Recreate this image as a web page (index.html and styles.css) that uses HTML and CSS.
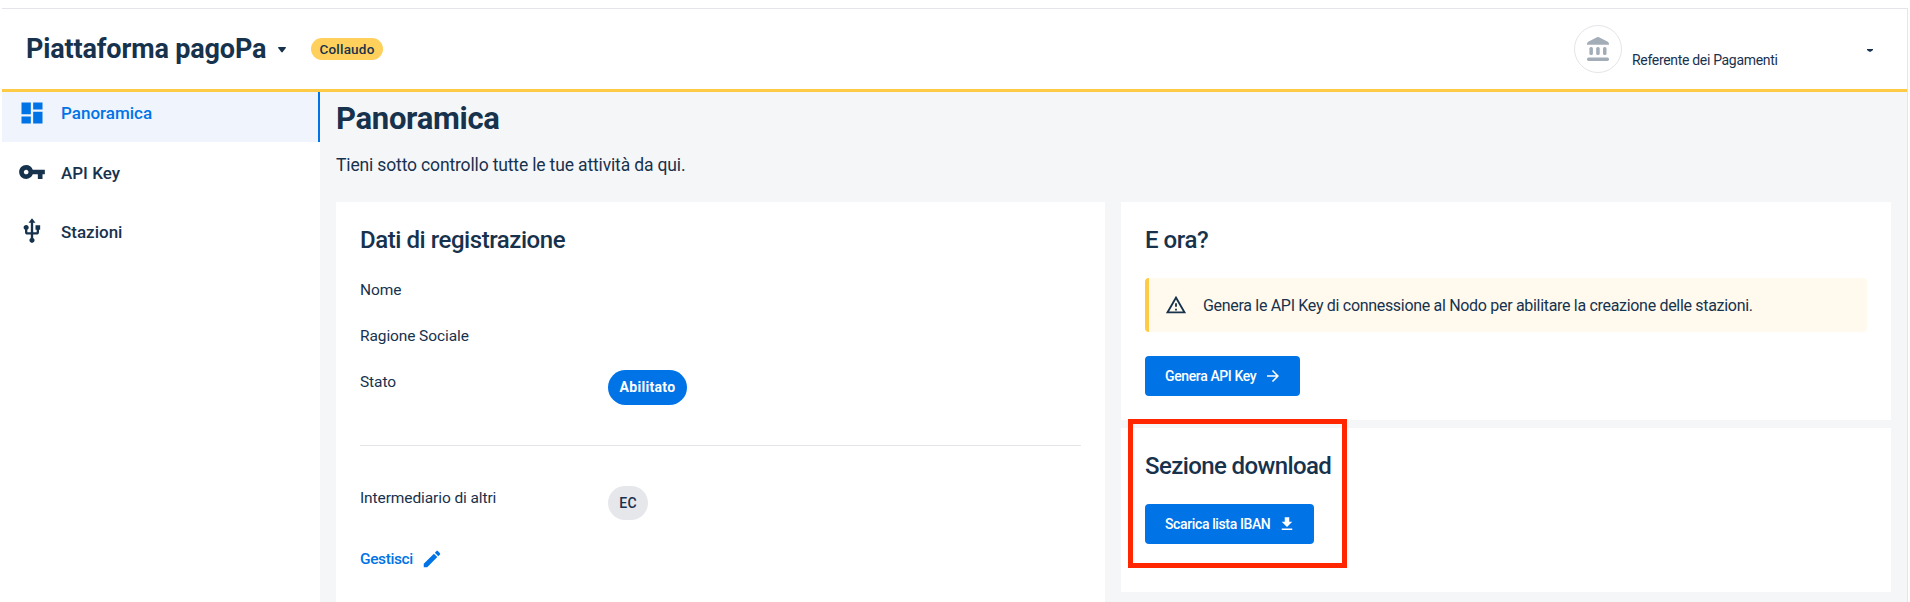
FILE: index.html
```html
<!DOCTYPE html>
<html lang="it">
<head>
<meta charset="utf-8">
<title>Piattaforma pagoPa</title>
<link rel="stylesheet" href="styles.css">
</head>
<body>
<div class="app">
  <header class="header">
    <div class="product">
      <span class="product-name">Piattaforma pagoPa</span>
      <svg class="product-caret" viewBox="0 0 8 6"><path d="M0 .7Q0 0 .8 0h6.400Q8 0 8 .7L4.700 5Q4 5.800 3.300 5z"/></svg>
      <span class="env-badge">Collaudo</span>
    </div>
    <div class="party">
      <span class="avatar">
        <svg viewBox="0 0 22 24" width="22" height="24"><path d="M10 .3Q11-.2 12 .3l8.800 4.500Q22 5.500 22 7v.7H0V7q0-1.500 1.200-2.200z"/><rect x="2.400" y="10" width="3.500" height="8" rx="1.500"/><rect x="9.200" y="10" width="3.500" height="8" rx="1.500"/><rect x="16" y="10" width="3.500" height="8" rx="1.500"/><rect y="20.500" width="22" height="3.400" rx="1.600"/></svg>
      </span>
      <span class="role">Referente dei Pagamenti</span>
      <svg class="party-caret" viewBox="0 0 6 3"><path d="M0 0h6v1L4 2.400Q3 3.300 2 2.400L0 1z"/></svg>
    </div>
  </header>
  <div class="body">
    <nav class="sidebar">
      <a class="nav-item active"><svg class="nav-icon" viewBox="0 0 24 24"><path d="M3 13h8V3H3zm0 8h8v-6H3zm10 0h8V11h-8zm0-18v6h8V3z"/></svg><span>Panoramica</span></a>
      <a class="nav-item"><svg class="nav-icon" viewBox="0 0 24 24"><path d="M12.650 10C11.830 7.670 9.610 6 7 6c-3.310 0-6 2.690-6 6s2.690 6 6 6c2.610 0 4.830-1.670 5.650-4H17v4h4v-4h2v-4zM7 14c-1.100 0-2-.9-2-2s.9-2 2-2 2 .9 2 2-.9 2-2 2z"/></svg><span>API Key</span></a>
      <a class="nav-item"><svg class="nav-icon" viewBox="0 0 24 24"><path d="M15 7v4h1v2h-3V5h2l-3-4-3 4h2v8H8v-2.070c.7-.37 1.200-1.080 1.200-1.930 0-1.210-.99-2.200-2.200-2.200-1.210 0-2.200.99-2.200 2.200 0 .85.5 1.560 1.200 1.930V13c0 1.110.89 2 2 2h3v3.050c-.71.370-1.200 1.100-1.200 1.950 0 1.220.99 2.200 2.200 2.200 1.210 0 2.200-.98 2.200-2.200 0-.85-.49-1.580-1.200-1.950V15h3c1.110 0 2-.89 2-2v-2h1V7z"/></svg><span>Stazioni</span></a>
    </nav>
    <main class="content">
      <h1 class="page-title">Panoramica</h1>
      <p class="page-sub">Tieni sotto controllo tutte le tue attività da qui.</p>
      <div class="cards">
        <section class="card registration">
          <h2 class="card-title">Dati di registrazione</h2>
          <dl class="fields">
            <div class="field"><dt>Nome</dt></div>
            <div class="field"><dt>Ragione Sociale</dt></div>
            <div class="field"><dt>Stato</dt><dd class="chip chip-primary">Abilitato</dd></div>
          </dl>
          <dl class="field broker"><dt>Intermediario di altri</dt><dd class="chip chip-default">EC</dd></dl>
          <a class="manage"><span>Gestisci</span><svg viewBox="0 0 24 24" width="22" height="22"><path d="M3 17.250V21h3.750L17.810 9.940l-3.750-3.750zM20.710 7.040c.39-.39.39-1.020 0-1.410l-2.340-2.340c-.39-.39-1.020-.39-1.410 0l-1.830 1.830 3.750 3.750z"/></svg></a>
        </section>
        <div class="column">
          <section class="card next">
            <h2 class="card-title">E ora?</h2>
            <div class="alert"><svg viewBox="0 0 24 24" width="22" height="22"><path d="M12 5.990L19.530 19H4.470zM12 2L1 21h22zm1 14h-2v2h2zm0-6h-2v4h2z"/></svg><span>Genera le API Key di connessione al Nodo per abilitare la creazione delle stazioni.</span></div>
            <a class="btn btn-api"><span>Genera API Key</span><svg viewBox="0 0 24 24" width="18" height="18"><path d="M12 4l-1.410 1.410L16.170 11H4v2h12.170l-5.580 5.590L12 20l8-8z"/></svg></a>
          </section>
          <section class="card download">
            <h2 class="card-title tight">Sezione download</h2>
            <a class="btn btn-iban"><span>Scarica lista IBAN</span><svg viewBox="0 0 24 24" width="18" height="18"><path d="M19 9h-4V3H9v6H5l7 7zM5 18v2h14v-2z"/></svg></a>
            <div class="highlight"></div>
          </section>
        </div>
      </div>
    </main>
  </div>
</div>
</body>
</html>
```
FILE: styles.css
```css
* { box-sizing: border-box; }
body {
  margin: 0;
  height: 602px;
  overflow: hidden;
  background: #fff;
  color: #17324d;
  font-family: Roboto, "Noto Sans", sans-serif;
  white-space: nowrap;
}
h1, h2, p, dl, dt, dd { margin: 0; }
svg { display: block; flex: none; fill: currentColor; }
.app {
  margin: 8px 2px 0;
  width: 1906px;
  height: 594px;
  border-right: 1px solid #e3e5e9;
  display: flex;
  flex-direction: column;
}
.header {
  height: 84px;
  flex: none;
  border-top: 1px solid #e3e5e9;
  border-bottom: 3px solid #ffcb46;
  padding: 0 34px 0 24px;
  display: flex;
  justify-content: space-between;
}
.product { display: flex; align-items: center; height: 80px; }
.product-name { font-size: 27px; font-weight: 700; line-height: 40px; width: 252px; letter-spacing: -0.15px; }
.product-caret { width: 8px; height: 6px; margin-top: 1px; }
.env-badge {
  margin-left: 25px;
  width: 72px;
  height: 22px;
  border-radius: 11px;
  background: #ffd05c;
  font-size: 13.500px;
  font-weight: 500;
  line-height: 22px;
  letter-spacing: 0.2px;
  text-align: center;
}
.party { display: flex; align-items: center; height: 80px; }
.avatar {
  width: 48px;
  height: 48px;
  border: 1px solid #e3e5e9;
  border-radius: 50%;
  color: #a2adb8;
  display: flex;
  align-items: center;
  justify-content: center;
}
.role { font-size: 14px; line-height: 20px; letter-spacing: -0.32px; margin: 21px 0 0 10px; width: 235px; }
.party-caret { width: 6px; height: 3px; margin-top: 3px; }
.body { flex: 1; display: flex; min-height: 0; }
.sidebar { width: 318px; flex: none; }
.nav-item {
  height: 59px;
  padding: 0 16px;
  display: flex;
  align-items: center;
  gap: 15px;
  font-size: 17px;
  font-weight: 500;
}
.nav-item.active {
  height: 50px;
  margin-bottom: 1px;
  padding-bottom: 9px;
  background: #eff4fd;
  border-right: 2px solid #0073e6;
  color: #0073e6;
}
.nav-icon { width: 28px; height: 28px; margin-top: -2px; }
.active .nav-icon { margin-top: 0; }
.content { flex: 1; background: #f5f6f8; padding: 7px 16px 0; min-width: 0; display: flex; flex-direction: column; }
.page-title { font-size: 31px; font-weight: 700; line-height: 40px; letter-spacing: -0.3px; }
.page-sub { font-size: 17.500px; line-height: 24px; letter-spacing: -0.15px; margin-top: 14px; }
.cards { display: grid; grid-template-columns: 769px 770px; gap: 16px; margin-top: 25px; flex: 1; }
.card { background: #fff; padding: 22px 24px 0; }
.card-title { font-size: 24px; font-weight: 500; line-height: 32px; letter-spacing: -0.45px; }
.card-title.tight { letter-spacing: -0.6px; }
.column { display: flex; flex-direction: column; gap: 8px; }
.fields { margin-top: 22px; height: 168px; border-bottom: 1px solid #e3e5e9; }
.field { display: flex; height: 46px; font-size: 15.500px; line-height: 24px; letter-spacing: -0.1px; }
.field dt { width: 248px; }
.chip {
  height: 35px;
  line-height: 35px;
  border-radius: 18px;
  font-size: 14px;
  font-weight: 500;
  letter-spacing: 0.3px;
  text-align: center;
}
.chip-primary { width: 79px; background: #0073e6; color: #fff; font-weight: 700; }
.chip-default { width: 40px; height: 34px; background: #e6e7eb; }
.broker { margin-top: 40px; }
.manage {
  display: flex;
  align-items: center;
  gap: 8px;
  height: 24px;
  margin-top: 15px;
  color: #0073e6;
  font-size: 15.500px;
  font-weight: 500;
  letter-spacing: -0.4px;
}
.next { height: 218px; }
.alert {
  margin-top: 22px;
  height: 54px;
  border-left: 4px solid #ffcb46;
  border-radius: 4px;
  background: #fffaed;
  display: flex;
  align-items: center;
  gap: 16px;
  padding-left: 16px;
  font-size: 16px;
  letter-spacing: -0.31px;
}
.btn {
  height: 40px;
  border-radius: 4px;
  background: #0073e6;
  color: #fff;
  display: flex;
  align-items: center;
  padding: 0 18px 0 20px;
  justify-content: space-between;
  font-size: 14px;
  font-weight: 500;
  letter-spacing: -0.38px;
}
.btn-api { width: 155px; margin-top: 24px; }
.download { height: 164px; position: relative; }
.btn-iban { width: 169px; margin-top: 22px; }
.highlight {
  position: absolute;
  left: 7px;
  top: -9px;
  width: 219px;
  height: 149px;
  border: 5px solid #ff2600;
}
```
